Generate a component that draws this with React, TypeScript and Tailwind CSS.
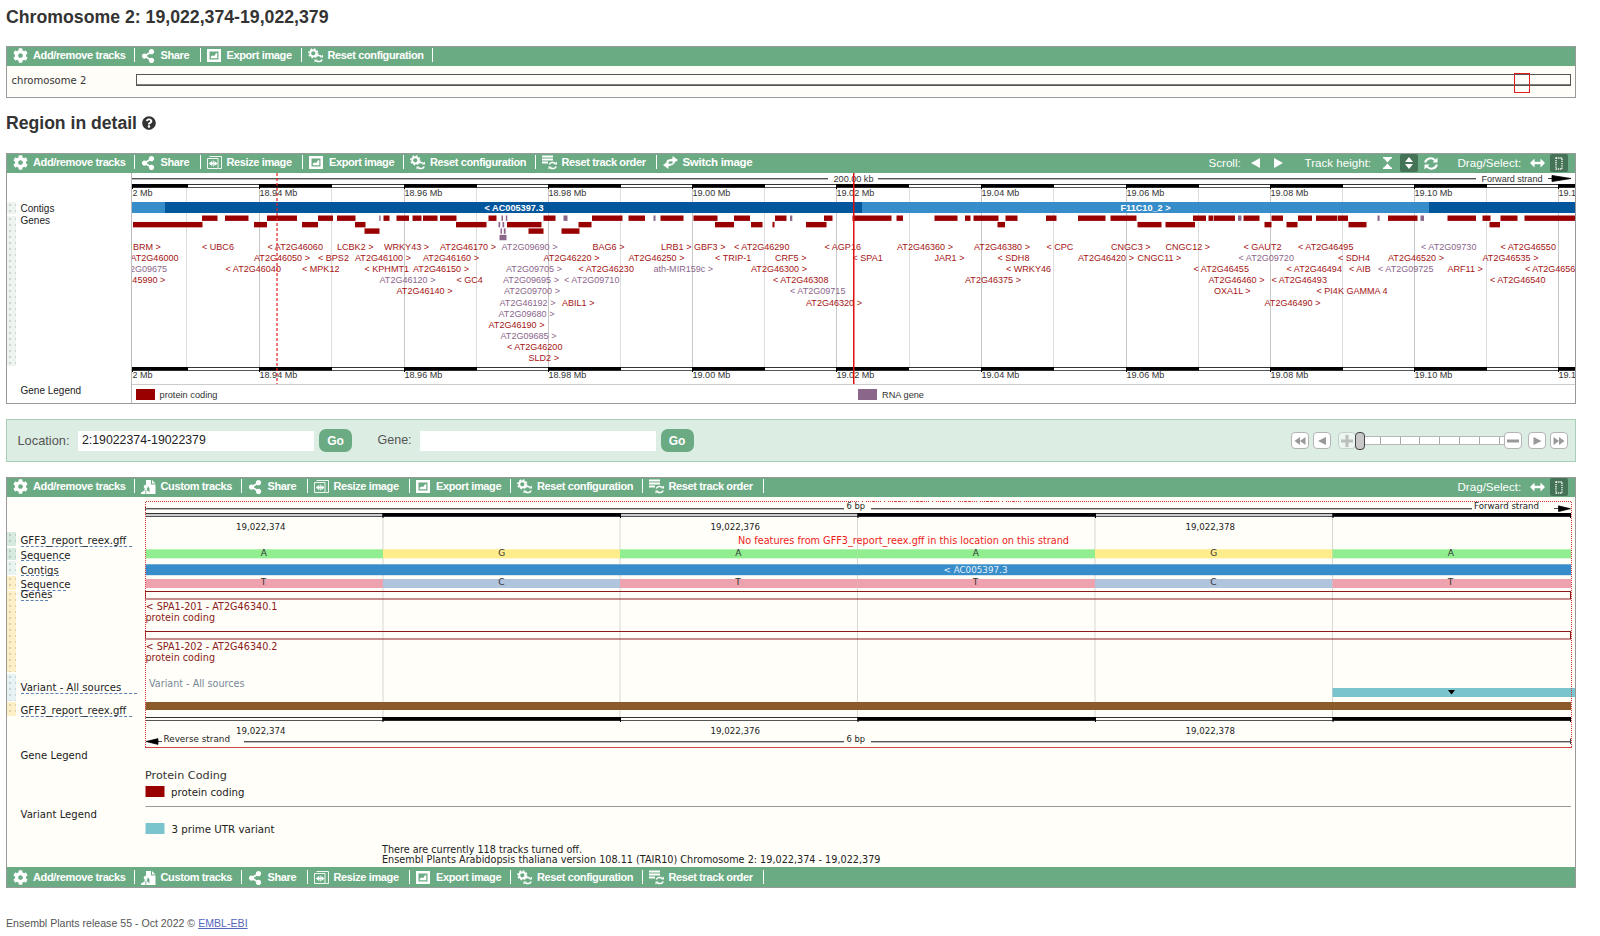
import React from "react";
import { FaCog, FaShareAlt, FaQuestionCircle } from "react-icons/fa";

const SANS = "font-['Liberation_Sans',Arial,sans-serif]";
const DEJA = "font-['DejaVu_Sans',Verdana,sans-serif]";

/* ---------- icons ---------- */

function ExportIcon() {
  return (
    <svg width="14" height="13" viewBox="0 0 14 13">
      <path fill="#fff" fillRule="evenodd" d="M0 0h14v13H0zM2.500 2.500v8h9v-8z" />
      <path fill="#fff" d="M3.800 9.300v-1.800l2-1 1.400.6 1.800-2.800h1.300v5z" />
    </svg>
  );
}

function ResizeIcon() {
  return (
    <svg width="15" height="13" viewBox="0 0 15 13" fill="none" stroke="#fff">
      <path d="M2.500.5h12v12h-3M.5 2.500h10.500v10H.5z" strokeWidth="1" opacity=".9" />
      <path d="M2.500 7.500h7" strokeWidth="1.400" />
      <path d="M5 5L2 7.500 5 10zM7.500 5l3 2.500-3 2.500z" fill="#fff" stroke="none" />
      <path d="M6.200 4.500v6" strokeWidth="1" />
    </svg>
  );
}

function SmallRefresh() {
  return (
    <g fill="none" stroke="#fff" strokeWidth="1.500">
      <path d="M7.200 9.600a3.600 3.200 0 0 1 6-1.200" />
      <path d="M14.200 11.400a3.600 3.200 0 0 1-6 1.200" />
      <path d="M15 6.500v3h-3zM6.500 14.500v-3h3z" fill="#fff" stroke="none" />
    </g>
  );
}

function ResetConfigIcon() {
  return (
    <svg width="16" height="15" viewBox="0 0 16 15">
      <circle cx="5.300" cy="5.300" r="3.100" fill="none" stroke="#fff" strokeWidth="1.900" />
      <circle cx="5.300" cy="5.300" r="4.500" fill="none" stroke="#fff" strokeWidth="1.400" strokeDasharray="1.800 1.734" />
      <path d="M7.500 8.500H16V15H6.500z" fill="#6bab83" />
      <SmallRefresh />
    </svg>
  );
}

function ResetOrderIcon() {
  return (
    <svg width="16" height="15" viewBox="0 0 16 15">
      <path d="M0 .5h11v2H0zM0 3.500h11v2H0zM0 6.500h6v2H0z" fill="#fff" />
      <SmallRefresh />
    </svg>
  );
}

function SwitchIcon() {
  return (
    <svg width="15" height="13" viewBox="0 0 15 13">
      <path d="M9.500 0L15 4 9.500 8V5.300H7L3.500 7.300V5Q5 3 9.500 2.800z" fill="#fff" />
      <path d="M5.500 5L0 9l5.500 4v-2.700q4-.3 6.500-3.300L8 7.800H5.500z" fill="#fff" />
    </svg>
  );
}

function CustomIcon() {
  return (
    <svg width="15" height="14" viewBox="0 0 15 14">
      <path d="M5 0h5v4.500h4.500V14H8.500V8L5 4.500zM11 0l3.500 3.500H11z" fill="#fff" />
      <circle cx="4.800" cy="6.800" r="2.100" fill="#fff" />
      <path d="M0 14v-1.500l3.500-2 .3-2h2l.3 2 2.900 2V14z" fill="#fff" />
      <path d="M4.800 10v4" stroke="#6bab83" strokeWidth=".8" />
    </svg>
  );
}

const BUTTONS: Record<string, { label: string; cls: string; icon: React.ReactNode }> = {
  add: { label: "Add/remove tracks", cls: "w-[127.500px]", icon: <FaCog size={15} /> },
  custom: { label: "Custom tracks", cls: "w-[107px]", icon: <CustomIcon /> },
  share: { label: "Share", cls: "w-[66px]", icon: <FaShareAlt size={14} /> },
  resize: { label: "Resize image", cls: "w-[102.500px]", icon: <ResizeIcon /> },
  export: { label: "Export image", cls: "w-[101px]", icon: <ExportIcon /> },
  reset: { label: "Reset configuration", cls: "w-[131.500px]", icon: <ResetConfigIcon /> },
  order: { label: "Reset track order", cls: "w-[121px]", icon: <ResetOrderIcon /> },
  switch: { label: "Switch image", cls: "w-[110px] border-r-0", icon: <SwitchIcon /> },
};

function SelectTools() {
  return (
    <>
      <span className="w-[72px] pb-px text-[11.600px]">Drag/Select:</span>
      <svg width="15" height="10" viewBox="0 0 15 10">
        <path d="M0 5l4.500-4.500v3.300h6V.5L15 5l-4.500 4.500V6.200h-6v3.300z" fill="#fff" />
      </svg>
      <span className="ml-[5px] mr-[7.500px] flex h-[18px] w-[18px] items-center justify-center rounded-[2px] bg-[#457357]">
        <svg width="8" height="13" viewBox="0 0 8 13">
          <rect x="1" y="1" width="6" height="11" fill="none" stroke="#fff" strokeWidth="1.300" strokeDasharray="1.300 .9" />
        </svg>
      </span>
    </>
  );
}

function Toolbar({ items, tall, children }: { items: string[]; tall?: boolean; children?: React.ReactNode }) {
  return (
    <div className={`flex shrink-0 bg-[#6bab83] text-white ${tall ? "h-[20px] items-center" : "h-[19px] items-start pt-px"} ${SANS}`}>
      {items.map((k) => (
        <div key={k} className={`flex h-[14px] shrink-0 items-center border-r border-white pl-[6px] ${BUTTONS[k].cls}`}>
          <span className="flex w-[20px] shrink-0 items-center pt-px">{BUTTONS[k].icon}</span>
          <span className={`whitespace-nowrap font-bold leading-[14px] ${k === "switch" ? "text-[11.500px] tracking-[-0.300px]" : "text-[11px] tracking-[-0.380px]"}`}>
            {BUTTONS[k].label}
          </span>
        </div>
      ))}
      <div className="ml-auto flex h-[16px] items-center leading-[14px]">{children}</div>
    </div>
  );
}

/* ---------- drawing helpers ---------- */

function T({ x, y, w, s = 9, fill = "#333", bold, f = SANS, children }: {
  x: number; y: number; w?: number; s?: number; fill?: string; bold?: boolean; f?: string; children: string;
}) {
  return (
    <text x={x} y={y} fontSize={s} fill={fill} fontWeight={bold ? 700 : 400} className={f} textLength={w} lengthAdjust="spacingAndGlyphs">
      {children}
    </text>
  );
}

function Bar({ x1, x2, y1, y2, fill }: { x1: number; x2: number; y1: number; y2: number; fill: string }) {
  return <rect x={x1} y={y1} width={x2 - x1} height={y2 - y1} fill={fill} />;
}

function ScaleLine({ x1, x2, y }: { x1: number; x2: number; y: number }) {
  return (
    <>
      <Bar x1={x1} x2={x2} y1={y} y2={y + 1} fill="#555" />
      <Bar x1={x1} x2={x2} y1={y + 1} y2={y + 2} fill="#bbb" />
    </>
  );
}

function Ruler({ x1, x2, y, blacks, inner }: { x1: number; x2: number; y: number; blacks: number[][]; inner: string }) {
  return (
    <>
      <Bar x1={x1} x2={x2} y1={y} y2={y + 1} fill="#333" />
      <Bar x1={x1} x2={x2} y1={y + 1} y2={y + 3} fill={inner} />
      <Bar x1={x1} x2={x2} y1={y + 3} y2={y + 4} fill="#555" />
      {blacks.map(([a, b]) => (
        <g key={a}>
          <Bar x1={a} x2={b} y1={y} y2={y + 3.500} fill="#000" />
          <Bar x1={a} x2={a + 1} y1={y} y2={y + 5} fill="#000" />
        </g>
      ))}
    </>
  );
}

/* ---------- overview data ---------- */

const R = "#990000";
const P = "#8b668b";

const GENES: number[][][] = [
  [[202, 217.5], [225, 248.5], [267, 297], [318, 333], [337, 355.5], [383.5, 389.5], [396.5, 409], [412.5, 421.5], [423, 437.5], [440, 456.5], [488.5, 496.5], [543.5, 555.5], [592, 622.5], [628.5, 645], [660.5, 683.5], [693.5, 717.5], [734, 750], [775, 786.5], [824, 832.5], [852.5, 891.5], [896.5, 903], [934.5, 957.5], [965, 970.5], [973.5, 998.5], [1005.5, 1017.5], [1046, 1056.5], [1078, 1105.5], [1110.5, 1136.5], [1193, 1206], [1208.5, 1213], [1213.6, 1235], [1243.5, 1259.5], [1271.5, 1283], [1298, 1312], [1316, 1337], [1337.6, 1348], [1388, 1417.5], [1447.5, 1476], [1482.5, 1490.5], [1500.5, 1517.5], [1524.5, 1575]],
  [[133, 202.5], [254, 267], [302, 318], [355, 365.5], [456, 486.5], [507, 541.5], [578.5, 591.5], [715, 734], [751, 762.5], [772.5, 774.5], [806, 826.5], [997.5, 1005], [1137.5, 1161.5], [1165.5, 1195], [1264.5, 1271.5], [1286.5, 1297.5], [1348.5, 1366.5], [1489.5, 1500]],
  [[364.5, 379.5], [528.5, 543.5], [561.5, 579.5]],
  [],
];

const RNA: number[][][] = [
  [[379.3, 380.6], [501.5, 503], [505.8, 507.3], [563.5, 567.5], [653.5, 655.5], [790, 792.3], [1238, 1241.5], [1377.5, 1379.6], [1420.5, 1424]],
  [[498.5, 500.2], [502.5, 504.2]],
  [[500.5, 502], [503.8, 505.6]],
  [[499.5, 506.5]],
];

const LABELS: [number, string][][] = [
  [[133, "BRM >"], [202, "< UBC6"], [267.5, "< AT2G46060"], [337, "LCBK2 >"], [384, "WRKY43 >"], [440, "AT2G46170 >"], [501.5, "AT2G09690 >"], [592.5, "BAG6 >"], [661, "LRB1 >"], [694, "GBF3 >"], [734, "< AT2G46290"], [824.5, "< AGP16"], [897, "AT2G46360 >"], [974, "AT2G46380 >"], [1046.5, "< CPC"], [1111, "CNGC3 >"], [1165.5, "CNGC12 >"], [1243.5, "< GAUT2"], [1298, "< AT2G46495"], [1421, "< AT2G09730"], [1500.5, "< AT2G46550"]],
  [[130.4, "AT2G46000"], [254, "AT2G46050 >"], [318, "< BPS2"], [355, "AT2G46100 >"], [423, "AT2G46160 >"], [543.5, "AT2G46220 >"], [628.5, "AT2G46250 >"], [715, "< TRIP-1"], [775, "CRF5 >"], [852.5, "< SPA1"], [934.5, "JAR1 >"], [997.5, "< SDH8"], [1078, "AT2G46420 >"], [1137.5, "CNGC11 >"], [1238.5, "< AT2G09720"], [1338, "< SDH4"], [1388, "AT2G46520 >"], [1482.5, "AT2G46535 >"]],
  [[119, "AT2G09675"], [225.5, "< AT2G46040"], [302, "< MPK12"], [364.5, "< KPHMT1"], [413, "AT2G46150 >"], [506, "AT2G09705 >"], [578.5, "< AT2G46230"], [653.5, "ath-MIR159c >"], [751, "AT2G46300 >"], [1006, "< WRKY46"], [1193.5, "< AT2G46455"], [1286.5, "< AT2G46494"], [1349, "< AIB"], [1378, "< AT2G09725"], [1447.5, "ARF11 >"], [1525, "< AT2G46560"]],
  [[109.4, "AT2G45990 >"], [379.5, "AT2G46120 >"], [456.5, "< GC4"], [503, "AT2G09695 >"], [564, "< AT2G09710"], [773, "< AT2G46308"], [965, "AT2G46375 >"], [1208.5, "AT2G46460 >"], [1271.5, "< AT2G46493"], [1490, "< AT2G46540"]],
  [[396.5, "AT2G46140 >"], [504, "AT2G09700 >"], [790, "< AT2G09715"], [1214, "OXA1L >"], [1316.5, "< PI4K GAMMA 4"]],
  [[499.5, "AT2G46192 >"], [562, "ABIL1 >"], [806, "AT2G46320 >"], [1264.5, "AT2G46490 >"]],
  [[498.5, "AT2G09680 >"]],
  [[488.5, "AT2G46190 >"]],
  [[500.5, "AT2G09685 >"]],
  [[507, "< AT2G46200"]],
  [[528.5, "SLD2 >"]],
];

const isRna = (t: string) => /AT2G09|MIR159|46120|46192/.test(t);

const MAJOR = [259, 404, 548, 692, 836, 981, 1126, 1270, 1414, 1558];
const MINOR = [186, 331, 476, 620, 764, 909, 1053, 1198, 1342, 1486];
const TICKS = ["18.94 Mb", "18.96 Mb", "18.98 Mb", "19.00 Mb", "19.02 Mb", "19.04 Mb", "19.06 Mb", "19.08 Mb", "19.10 Mb", "19.12 Mb"];
const BLACKS = [[132, 188], ...MAJOR.map((x) => [x, Math.min(x + 73, 1575)])];

function OverviewPlot() {
  return (
    <svg width="1443" height="230" viewBox="132 173 1443 230" className="block shrink-0">
      {MAJOR.map((x) => <Bar key={x} x1={x} x2={x + 1} y1={188} y2={367} fill="#c8c8c8" />)}
      {MINOR.map((x) => <Bar key={x} x1={x} x2={x + 1} y1={188} y2={367} fill="#dedede" />)}
      <ScaleLine x1={132} x2={828} y={178} />
      <T x={833.500} y={181.500} w={40}>200.00 kb</T>
      <ScaleLine x1={878} x2={1476} y={178} />
      <T x={1481.500} y={181.500} w={61}>Forward strand</T>
      <path d="M1548 178.500h6M1552 175.500l19 3-19 3z" stroke="#000" strokeWidth=".8" />
      {[184, 366.5].map((y) => (
        <g key={y}>
          <Ruler x1={132} x2={1575} y={Math.round(y)} blacks={BLACKS} inner="#fff" />
          <T x={132.500} y={y + 11.600}>2 Mb</T>
          {MAJOR.map((x, i) => <T key={x} x={x + 0.500} y={y + 11.600} w={37.800}>{TICKS[i]}</T>)}
        </g>
      ))}
      <Bar x1={132} x2={165} y1={202} y2={213} fill="#368dc9" />
      <Bar x1={165} x2={862} y1={202} y2={213} fill="#01569c" />
      <Bar x1={862} x2={1429} y1={202} y2={213} fill="#368dc9" />
      <Bar x1={1429} x2={1575} y1={202} y2={213} fill="#01569c" />
      <T x={484.500} y={210.800} w={59} bold fill="#fff">{"< AC005397.3"}</T>
      <T x={1120.500} y={210.800} w={50} bold fill="#fff">{"F11C10_2 >"}</T>
      {GENES.map((row, r) => row.map(([a, b]) => <Bar key={r + "-" + a} x1={a} x2={b} y1={215.500 + 6.450 * r} y2={220.900 + 6.450 * r} fill={R} />))}
      {RNA.map((row, r) => row.map(([a, b]) => <Bar key={r + "-" + a} x1={a} x2={b} y1={215.500 + 6.450 * r} y2={220.900 + 6.450 * r} fill={P} />))}
      {LABELS.map((row, r) => row.map(([x, t]) => (
        <T key={t} x={x} y={250 + 11.100 * r} s={9.050} fill={isRna(t) ? P : "#a51414"}>{t}</T>
      )))}
      <path d="M277 173v212" stroke="#e02020" strokeWidth="1.200" strokeDasharray="3 2" />
      <Bar x1={853} x2={854.500} y1={173} y2={385} fill="#e01010" />
      <Bar x1={132} x2={1575} y1={384} y2={385} fill="#ccc" />
      <Bar x1={136} x2={155} y1={389} y2={400} fill={R} />
      <T x={159.500} y={397.500} w={58}>protein coding</T>
      <Bar x1={858} x2={877} y1={389} y2={400} fill={P} />
      <T x={882} y={397.500} w={42}>RNA gene</T>
    </svg>
  );
}

/* ---------- detail view ---------- */

const EDGES = [145.5, 383, 620, 857.5, 1095, 1332.5, 1571];
const TOP = ["A", "G", "A", "A", "G", "A"];
const BOT = ["T", "C", "T", "T", "C", "T"];
const BASE: Record<string, string> = { A: "#90ee90", G: "#ffec8b", T: "#eea2ad", C: "#b0c4de" };
const DARK = "#8b1a1a";

function DetailPlot() {
  return (
    <svg width="1432" height="370" viewBox="143 497 1432 370" className="block shrink-0">
      {EDGES.slice(1, 6).map((x) => <Bar key={x} x1={x - 0.500} x2={x + 0.500} y1={517} y2={717} fill="#d8d8d4" />)}
      <ScaleLine x1={145.500} x2={844} y={508} />
      <ScaleLine x1={871} x2={1472} y={508} />
      <Bar x1={145} x2={146} y1={506} y2={511} fill="#444" />
      <T f={DEJA} x={846.500} y={509} w={18.500} fill="#222">6 bp</T>
      <T f={DEJA} x={1474} y={509} w={65} fill="#222">Forward strand</T>
      <path d="M1554 508.500h5M1558.500 505.800l12 2.900-12 2.900z" stroke="#000" strokeWidth=".7" />
      {[513, 717].map((y) => (
        <g key={y}>
          <Ruler x1={145.500} x2={1571} y={y} blacks={[[382.5, 620], [857.5, 1095], [1332.5, 1571]]} inner={y < 600 ? "#ccc" : "#fffef8"} />
          {[620, 1095, 1570].map((x) => <Bar key={x} x1={x} x2={x + 1} y1={y} y2={y + 5} fill="#000" />)}
          <T f={DEJA} x={236} y={y + 16.600} w={49.500} fill="#222">19,022,374</T>
          <T f={DEJA} x={710.500} y={y + 16.600} w={49.500} fill="#222">19,022,376</T>
          <T f={DEJA} x={1185.500} y={y + 16.600} w={49.500} fill="#222">19,022,378</T>
        </g>
      ))}
      <T f={DEJA} x={738} y={544} w={331} s={10} fill="#ee1c1c">No features from GFF3_report_reex.gff in this location on this strand</T>
      {TOP.map((b, i) => (
        <g key={i}>
          <Bar x1={EDGES[i]} x2={EDGES[i + 1]} y1={549.300} y2={558.300} fill={BASE[b]} />
          <Bar x1={EDGES[i]} x2={EDGES[i + 1]} y1={579} y2={588} fill={BASE[BOT[i]]} />
          <T f={DEJA} x={EDGES[i] + 115.300} y={556} fill="#333">{b}</T>
          <T f={DEJA} x={EDGES[i] + 115.300} y={585.400} fill="#333">{BOT[i]}</T>
        </g>
      ))}
      <Bar x1={145.500} x2={1571} y1={564.300} y2={575.200} fill="#368dc9" />
      <T f={DEJA} x={943.500} y={573.300} w={64} fill="#e8f2fa">{"< AC005397.3"}</T>
      {[591.5, 631.5].map((y, i) => (
        <g key={y}>
          <rect x={145.500} y={y} width={1425} height={7.500} fill="none" stroke={DARK} strokeWidth="1" />
          <T f={DEJA} x={145.500} y={y + 18.900} w={132} s={10} fill={DARK}>{"< SPA1-20" + (i + 1) + " - AT2G46340." + (i + 1)}</T>
          <T f={DEJA} x={145.500} y={y + 29.200} w={69.500} s={10} fill={DARK}>protein coding</T>
        </g>
      ))}
      <T f={DEJA} x={149} y={686.800} w={95.500} s={10} fill="#778899">Variant - All sources</T>
      <Bar x1={1332.500} x2={1575} y1={688} y2={697} fill="#7ac5cd" />
      <path d="M1448 690h7l-3.500 4.500z" />
      <Bar x1={145.500} x2={1571} y1={702} y2={710} fill="#8b5a2b" />
      <path d="M157 741.500h5M146 741.500l12-2.900v5.800z" stroke="#000" strokeWidth=".7" />
      <T f={DEJA} x={163.500} y={741.700} w={66.500} fill="#222">Reverse strand</T>
      <ScaleLine x1={244} x2={844} y={741} />
      <T f={DEJA} x={846.500} y={741.700} w={18.500} fill="#222">6 bp</T>
      <ScaleLine x1={871} x2={1571} y={741} />
      <Bar x1={1570} x2={1571} y1={738.500} y2={744} fill="#444" />
      <path d="M145.500 501.500H1571.500M145.500 502V747M1571 502V747" fill="none" stroke="#d63a3a" strokeWidth="1" strokeDasharray="1 1" shapeRendering="crispEdges" />
      <Bar x1={145} x2={1572} y1={747} y2={748} fill="#cc4444" />
      <T f={DEJA} x={145} y={778.500} w={82} s={11} fill="#333">Protein Coding</T>
      <Bar x1={145.500} x2={164.500} y1={786} y2={797} fill={R} />
      <T f={DEJA} x={171} y={796} w={73.500} s={10} fill="#222">protein coding</T>
      <Bar x1={145.500} x2={1571} y1={806} y2={807} fill="#999" />
      <Bar x1={145.500} x2={164.500} y1={823} y2={834} fill="#7ac5cd" />
      <T f={DEJA} x={171.500} y={832.800} w={103} s={10} fill="#222">3 prime UTR variant</T>
      <T f={DEJA} x={382} y={852.500} w={200} s={10} fill="#222">There are currently 118 tracks turned off.</T>
      <T f={DEJA} x={382} y={862.600} w={498.500} s={10} fill="#222">Ensembl Plants Arabidopsis thaliana version 108.11 (TAIR10) Chromosome 2: 19,022,374 - 19,022,379</T>
    </svg>
  );
}

const DOTS = "bg-[radial-gradient(circle,#00000022_0.7px,transparent_1px)] bg-[size:6px_6px]";

const DETAIL_ROWS = [
  { label: "GFF3_report_reex.gff", row: "h-[15.500px]", pad: "pt-[3px]", handle: "bg-[#d7eae0]", line: "w-[111px]" },
  { label: "Sequence", row: "h-[13.500px]", pad: "pt-[2px]", handle: "bg-[#d7eae0]", line: "w-[45px]" },
  { label: "Contigs", row: "h-[15px]", pad: "pt-[3.500px]", handle: "bg-[#e9f3f0]", line: "w-[38px]" },
  { label: "Sequence", row: "h-[15px]", pad: "pt-[3px]", handle: "bg-[#fdf0c6]", line: "w-[45px]" },
  { label: "Genes", row: "h-[82.500px]", pad: "-mt-[2px]", handle: "bg-[#fdf0c6]", line: "w-[27px]" },
  { label: "Variant - All sources", row: "h-[28.500px]", pad: "pt-[8.500px]", handle: "bg-[#e6f2f4]", line: "w-[116px]" },
  { label: "GFF3_report_reex.gff", row: "h-[15px]", pad: "pt-[3px]", handle: "bg-[#fdf0c6]", line: "w-[111px]" },
];

function DetailLabels() {
  return (
    <div className={`flex w-[136px] shrink-0 flex-col pt-[35px] text-[10.150px] leading-[12px] text-[#222] ${DEJA}`}>
      {DETAIL_ROWS.map((r, i) => (
        <div key={i} className={`flex shrink-0 ${r.row}`}>
          <div className="w-[9px] shrink-0 pb-[1.500px]">
            <div className={`h-full ${r.handle} ${DOTS}`} />
          </div>
          <div className={`ml-[4.500px] whitespace-nowrap ${r.pad}`}>
            <div className={`h-[11.500px] border-b border-dashed border-[#5b7fb5] ${r.line}`}>{r.label}</div>
          </div>
        </div>
      ))}
      <div className="ml-[13.500px] mt-[33px]">Gene Legend</div>
      <div className="ml-[13.500px] mt-[47px]">Variant Legend</div>
    </div>
  );
}

/* ---------- navigation ---------- */

function NavButton({ d, faded }: { d: string; faded?: boolean }) {
  return (
    <span className={`flex h-[17px] w-[18px] items-center justify-center rounded-[4px] border ${faded ? "border-[#c4d2ca] bg-[#edf5f0]" : "border-[#b4b4b4] bg-white"}`}>
      <svg width="14" height="12" viewBox="0 0 14 12"><path d={d} fill={faded ? "#b9c0bc" : "#999"} /></svg>
    </span>
  );
}

function ZoomSlider() {
  return (
    <div className="mr-[7.500px] flex items-center">
      <NavButton d="M7 2v8L1.500 6zM12.500 2v8L7 6z" />
      <span className="w-[4px]" />
      <NavButton d="M11 2v8L3 6z" />
      <span className="w-[7px]" />
      <NavButton faded d="M5.500 0h3v4.500H13v3H8.500V12h-3V7.500H1v-3h4.500z" />
      <span className="-ml-[1px] h-[18px] w-[10px] rounded-[4px] border border-[#444] bg-[#c8c8c8]" />
      <span className="flex h-[9px] w-[139px] border-y border-[#b8b8b8] bg-white">
        <i className="w-[16px] border-r border-[#aaa]" />
        <i className="w-[19.500px] border-r border-[#aaa]" />
        <i className="w-[19.500px] border-r border-[#aaa]" />
        <i className="w-[20px] border-r border-[#aaa]" />
        <i className="w-[19.500px] border-r border-[#aaa]" />
        <i className="w-[20px] border-r border-[#aaa]" />
        <i className="w-[20px] border-r border-[#aaa]" />
      </span>
      <NavButton d="M1 4.500h12v3H1z" />
      <span className="w-[5.500px]" />
      <NavButton d="M3.500 2v8l8-4z" />
      <span className="w-[4px]" />
      <NavButton d="M1.500 2v8L7 6zM7 2v8l5.500-4z" />
    </div>
  );
}

function GoButton() {
  return <button className="ml-[5px] h-[23px] w-[33px] rounded-[7px] bg-[#6bab83] text-[12px] font-bold text-white">Go</button>;
}

const PANEL = "ml-[6px] flex w-[1570px] shrink-0 flex-col border border-[#999]";
const BOTTOM = ["add", "custom", "share", "resize", "export", "reset", "order"];

export default function App() {
  return (
    <div className={`flex h-[936px] w-[1600px] flex-col overflow-hidden bg-white ${SANS}`}>
      <h1 className="h-[46px] shrink-0 pl-[6px] pt-[7px] text-[17.700px] font-bold leading-[20px] text-[#333]">
        Chromosome 2: 19,022,374-19,022,379
      </h1>

      <section className={`${PANEL} h-[52px] bg-[#fffdf8]`}>
        <Toolbar items={["add", "share", "export", "reset"]} />
        <div className="flex flex-1 items-start">
          <span className={`w-[129px] shrink-0 pl-[4.500px] pt-[9px] text-[10.050px] leading-[12px] text-[#333] ${DEJA}`}>chromosome 2</span>
          <svg width="1439" height="30" viewBox="136 66 1439 30">
            <rect x="136.500" y="74.500" width="1434" height="10.500" fill="none" stroke="#555" />
            <path d="M136 85.300h1435" stroke="#555" strokeWidth="1.400" />
            <rect x="1514.500" y="73.500" width="15" height="19" fill="none" stroke="#e02020" />
          </svg>
        </div>
      </section>

      <h2 className="flex h-[55px] shrink-0 items-start pl-[6px] pt-[15px] text-[17.600px] font-bold leading-[20px] text-[#333]">
        Region in detail
        <FaQuestionCircle size={14} className="ml-[5px] mt-[3px]" />
      </h2>

      <section className={`${PANEL} h-[251px] bg-white`}>
        <Toolbar items={["add", "share", "resize", "export", "reset", "order", "switch"]}>
          <span className="w-[41px] pb-px text-[11.600px]">Scroll:</span>
          <svg width="34" height="10" viewBox="0 0 34 10"><path d="M10 0v10L1 5zM24 0v10l9-5z" fill="#fff" /></svg>
          <span className="ml-[21px] w-[78px] pb-px text-[11.600px]">Track height:</span>
          <svg width="9" height="12" viewBox="0 0 9 12"><path d="M0 0h9v1.500H8L4.500 5.500 1 1.500H0zM0 12h9v-1.500H8L4.500 6.500 1 10.500H0z" fill="#fff" /></svg>
          <span className="ml-[8px] flex h-[18px] w-[18px] items-center justify-center rounded-[2px] bg-[#457357]">
            <svg width="8" height="12" viewBox="0 0 8 12"><path d="M0 5l4-5 4 5zM0 7l4 5 4-5z" fill="#fff" /></svg>
          </span>
          <svg className="ml-[6px] mr-[20px]" width="14" height="13" viewBox="0 0 14 13">
            <path d="M1.200 5.500A5.500 5 0 0 1 11 3.300M12.800 7.500A5.500 5 0 0 1 3 9.700" fill="none" stroke="#fff" strokeWidth="2" />
            <path d="M13.500.5v5h-5zM.5 12.500v-5h5z" fill="#fff" />
          </svg>
          <SelectTools />
        </Toolbar>
        <div className="flex">
          <div className="flex w-[125px] shrink-0 flex-col border-r border-[#bbb] pt-[29px] text-[10px] leading-[12px] text-[#222]">
            <div className="flex h-[13.500px]">
              <div className={`h-[12px] w-[9px] bg-[#eef5f1] ${DOTS}`} />
              <span className="ml-[4.500px] mt-[0.500px]">Contigs</span>
            </div>
            <div className="flex h-[150px]">
              <div className={`w-[9px] bg-[#eef5f1] ${DOTS}`} />
              <span className="ml-[4.500px] -mt-[0.500px]">Genes</span>
            </div>
            <span className="ml-[13.500px] mt-[19px]">Gene Legend</span>
          </div>
          <OverviewPlot />
        </div>
      </section>

      <form className="ml-[6px] mt-[15px] flex h-[43px] w-[1570px] shrink-0 items-center border border-[#a9ceb8] bg-[#dcede3] text-[#555]">
        <label className="w-[71px] shrink-0 pl-[10.500px] text-[12.800px]">Location:</label>
        <div className="flex h-[20px] w-[236px] items-center bg-white pl-[4px] text-[12.300px] text-[#222]">2:19022374-19022379</div>
        <GoButton />
        <label className="ml-[25.500px] w-[42px] text-[12.500px]">Gene:</label>
        <div className="h-[20px] w-[236px] bg-white" />
        <GoButton />
        <div className="ml-auto"><ZoomSlider /></div>
      </form>

      <section className={`${PANEL} mt-[15px] h-[411px] bg-[#fffef8]`}>
        <Toolbar items={BOTTOM}><SelectTools /></Toolbar>
        <div className="flex h-[370px] shrink-0">
          <DetailLabels />
          <DetailPlot />
        </div>
        <Toolbar items={BOTTOM} tall />
      </section>

      <footer className="pl-[6px] pt-[28px] text-[10.600px] leading-[14px] text-[#555]">
        Ensembl Plants release 55 - Oct 2022 © <a className="text-[#5566bb] underline">EMBL-EBI</a>
      </footer>
    </div>
  );
}
